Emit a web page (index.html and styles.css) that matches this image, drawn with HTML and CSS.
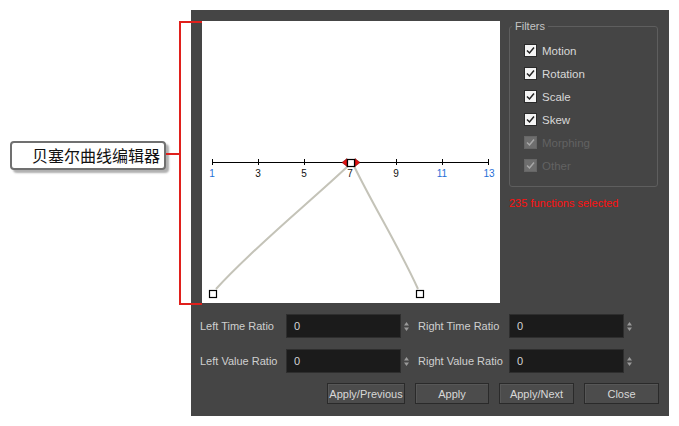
FILE: index.html
```html
<!DOCTYPE html>
<html>
<head>
<meta charset="utf-8">
<link rel="stylesheet" href="styles.css">
</head>
<body>
<div class="page">
  <div class="annot">
    <div class="callout">贝塞尔曲线编辑器</div>
  </div>
  <div class="bracket"></div>
  <div class="connector"></div>
  <div class="dialog">
    <div class="top">
      <div class="canvas">
        <svg width="298" height="282" viewBox="0 0 298 282">
          <g stroke="#000" stroke-width="1" shape-rendering="crispEdges">
            <line x1="10" y1="141.5" x2="286" y2="141.5"/>
            <line x1="10.5" y1="138" x2="10.5" y2="144"/>
            <line x1="56.5" y1="138" x2="56.5" y2="144"/>
            <line x1="102.5" y1="138" x2="102.5" y2="144"/>
            <line x1="148.5" y1="138" x2="148.5" y2="144"/>
            <line x1="194.5" y1="138" x2="194.5" y2="144"/>
            <line x1="240.5" y1="138" x2="240.5" y2="144"/>
            <line x1="286.5" y1="138" x2="286.5" y2="144"/>
          </g>
          <g class="ticks" text-anchor="middle">
            <text x="10" y="156" fill="#1f6fd6">1</text>
            <text x="56" y="156" fill="#111">3</text>
            <text x="102" y="156" fill="#111">5</text>
            <text x="148" y="156" fill="#111">7</text>
            <text x="194" y="156" fill="#111">9</text>
            <text x="240" y="156" fill="#1f6fd6">11</text>
            <text x="287" y="156" fill="#1f6fd6">13</text>
          </g>
          <g fill="none" stroke="#c4c3b8" stroke-width="2">
            <path d="M146 145 C 108 181, 52 226, 14 268"/>
            <path d="M152 145 C 172 186, 198 228, 216 268"/>
          </g>
          <polygon points="140,141.5 145,137.5 145,145.5" fill="#e01010" stroke="#600" stroke-width="0.5"/>
          <polygon points="158,141.5 153,137.5 153,145.5" fill="#e01010" stroke="#600" stroke-width="0.5"/>
          <rect x="145.5" y="138.5" width="7" height="7" fill="#fff" stroke="#000" stroke-width="1.2"/>
          <rect x="7.5" y="269.5" width="7" height="7" fill="#fff" stroke="#000" stroke-width="1.2"/>
          <rect x="214.5" y="269.5" width="7" height="7" fill="#fff" stroke="#000" stroke-width="1.2"/>
        </svg>
      </div>
      <div class="side">
        <div class="group">
          <div class="group-title">Filters</div>
          <div class="check"><svg class="cb" width="13" height="13" viewBox="0 0 13 13"><rect x="0.5" y="0.5" width="12" height="12" fill="#f4f4f4" stroke="#2a2a2a"/><polyline points="3,6.5 5.5,9 10,3.5" fill="none" stroke="#222" stroke-width="1.5"/></svg><span>Motion</span></div>
          <div class="check"><svg class="cb" width="13" height="13" viewBox="0 0 13 13"><rect x="0.5" y="0.5" width="12" height="12" fill="#f4f4f4" stroke="#2a2a2a"/><polyline points="3,6.5 5.5,9 10,3.5" fill="none" stroke="#222" stroke-width="1.5"/></svg><span>Rotation</span></div>
          <div class="check"><svg class="cb" width="13" height="13" viewBox="0 0 13 13"><rect x="0.5" y="0.5" width="12" height="12" fill="#f4f4f4" stroke="#2a2a2a"/><polyline points="3,6.5 5.5,9 10,3.5" fill="none" stroke="#222" stroke-width="1.5"/></svg><span>Scale</span></div>
          <div class="check"><svg class="cb" width="13" height="13" viewBox="0 0 13 13"><rect x="0.5" y="0.5" width="12" height="12" fill="#f4f4f4" stroke="#2a2a2a"/><polyline points="3,6.5 5.5,9 10,3.5" fill="none" stroke="#222" stroke-width="1.5"/></svg><span>Skew</span></div>
          <div class="check disabled"><svg class="cb" width="13" height="13" viewBox="0 0 13 13"><rect x="0.5" y="0.5" width="12" height="12" fill="#6e6e6e" stroke="#666"/><polyline points="3,6.5 5.5,9 10,3.5" fill="none" stroke="#a8a8a8" stroke-width="1.5"/></svg><span>Morphing</span></div>
          <div class="check disabled"><svg class="cb" width="13" height="13" viewBox="0 0 13 13"><rect x="0.5" y="0.5" width="12" height="12" fill="#6e6e6e" stroke="#666"/><polyline points="3,6.5 5.5,9 10,3.5" fill="none" stroke="#a8a8a8" stroke-width="1.5"/></svg><span>Other</span></div>
        </div>
        <div class="count">235 functions selected</div>
      </div>
    </div>
    <div class="fields">
      <span class="flabel">Left Time Ratio</span>
      <div class="input">0</div>
      <div class="spin"><svg width="5" height="9" viewBox="0 0 5 9"><polygon points="2.5,0 5,3.5 0,3.5" fill="#9a9a9a"/><polygon points="2.5,9 5,5.5 0,5.5" fill="#9a9a9a"/></svg></div>
      <span class="flabel">Right Time Ratio</span>
      <div class="input">0</div>
      <div class="spin"><svg width="5" height="9" viewBox="0 0 5 9"><polygon points="2.5,0 5,3.5 0,3.5" fill="#9a9a9a"/><polygon points="2.5,9 5,5.5 0,5.5" fill="#9a9a9a"/></svg></div>
      <span class="flabel">Left Value Ratio</span>
      <div class="input">0</div>
      <div class="spin"><svg width="5" height="9" viewBox="0 0 5 9"><polygon points="2.5,0 5,3.5 0,3.5" fill="#9a9a9a"/><polygon points="2.5,9 5,5.5 0,5.5" fill="#9a9a9a"/></svg></div>
      <span class="flabel">Right Value Ratio</span>
      <div class="input">0</div>
      <div class="spin"><svg width="5" height="9" viewBox="0 0 5 9"><polygon points="2.5,0 5,3.5 0,3.5" fill="#9a9a9a"/><polygon points="2.5,9 5,5.5 0,5.5" fill="#9a9a9a"/></svg></div>
    </div>
    <div class="buttons">
      <button class="btn w78">Apply/Previous</button>
      <button class="btn w74">Apply</button>
      <button class="btn w75">Apply/Next</button>
      <button class="btn w75">Close</button>
    </div>
  </div>
</div>
</body>
</html>
```
FILE: styles.css
```css
html, body {
  margin: 0;
  padding: 0;
  background: #ffffff;
}
.page {
  position: relative;
  width: 679px;
  height: 426px;
  display: flex;
  align-items: flex-start;
  font-family: "Liberation Sans", Arial, sans-serif;
}
.annot {
  flex: none;
  width: 191px;
  box-sizing: border-box;
  padding-top: 141px;
  padding-left: 10px;
}
.callout {
  width: 156px;
  height: 29px;
  box-sizing: border-box;
  border: 2px solid #707070;
  border-radius: 4px;
  background: #ffffff;
  box-shadow: 3px 3px 2px #b0b0b0;
  font-family: "Noto Sans CJK SC", sans-serif;
  font-size: 16px;
  line-height: 25px;
  color: #111;
  text-align: right;
  padding-right: 4px;
}
.bracket {
  position: absolute;
  left: 179px;
  top: 21px;
  width: 21px;
  height: 280px;
  border: 2px solid #e0201c;
  border-right: none;
  z-index: 2;
}
.connector {
  position: absolute;
  left: 166px;
  top: 153px;
  width: 14px;
  height: 2px;
  background: #e0201c;
}
.dialog {
  flex: none;
  margin-top: 10px;
  width: 478px;
  height: 406px;
  box-sizing: border-box;
  background: #454545;
  padding: 11px 11px 0 11px;
  font-size: 11px;
  color: #d6d6d6;
}
.top {
  display: flex;
  gap: 9px;
}
.canvas {
  width: 298px;
  height: 282px;
  background: #ffffff;
  flex: none;
}
.canvas svg {
  display: block;
}
.ticks text {
  font-family: "Liberation Sans", Arial, sans-serif;
  font-size: 10px;
}
.side {
  width: 149px;
  padding-top: 5px;
}
.group {
  position: relative;
  height: 161px;
  box-sizing: border-box;
  border: 1px solid #5e5e5e;
  border-radius: 3px;
  padding: 12px 0 0 14px;
}
.group-title {
  position: absolute;
  top: -7px;
  left: 2px;
  padding: 0 3px;
  background: #454545;
  color: #c4c4c4;
  line-height: 13px;
}
.check {
  height: 23px;
  display: flex;
  align-items: center;
  gap: 5px;
  color: #d8d8d8;
  font-size: 11.5px;
}
.check .cb {
  display: block;
  flex: none;
}
.check.disabled {
  color: #626262;
}
.count {
  margin-top: 10px;
  color: #ff1010;
  line-height: 13px;
}
.fields {
  display: grid;
  grid-template-columns: 86px 115px 17px 91px 115px 17px;
  grid-auto-rows: 24px;
  row-gap: 11px;
  margin-top: 11px;
  margin-left: -2px;
  align-items: center;
}
.flabel {
  white-space: nowrap;
  color: #cfcfcf;
}
.input {
  height: 24px;
  box-sizing: border-box;
  background: #1b1b1b;
  border: 1px solid #2e2e2e;
  padding-left: 7px;
  line-height: 22px;
  color: #d4d4d4;
}
.spin {
  padding-left: 3px;
  display: flex;
  align-items: center;
}
.spin svg {
  display: block;
}
.buttons {
  display: flex;
  justify-content: flex-end;
  gap: 10px;
  margin-top: 10px;
  margin-right: -1px;
}
.btn {
  height: 21px;
  box-sizing: border-box;
  background: #4c4c4c;
  border: 1px solid #2a2a2a;
  box-shadow: inset 1px 1px 0 #575757;
  color: #d8d8d8;
  font-family: "Liberation Sans", Arial, sans-serif;
  font-size: 11px;
  padding: 0;
}
.w78 { width: 78px; }
.w74 { width: 74px; }
.w75 { width: 75px; }
```
